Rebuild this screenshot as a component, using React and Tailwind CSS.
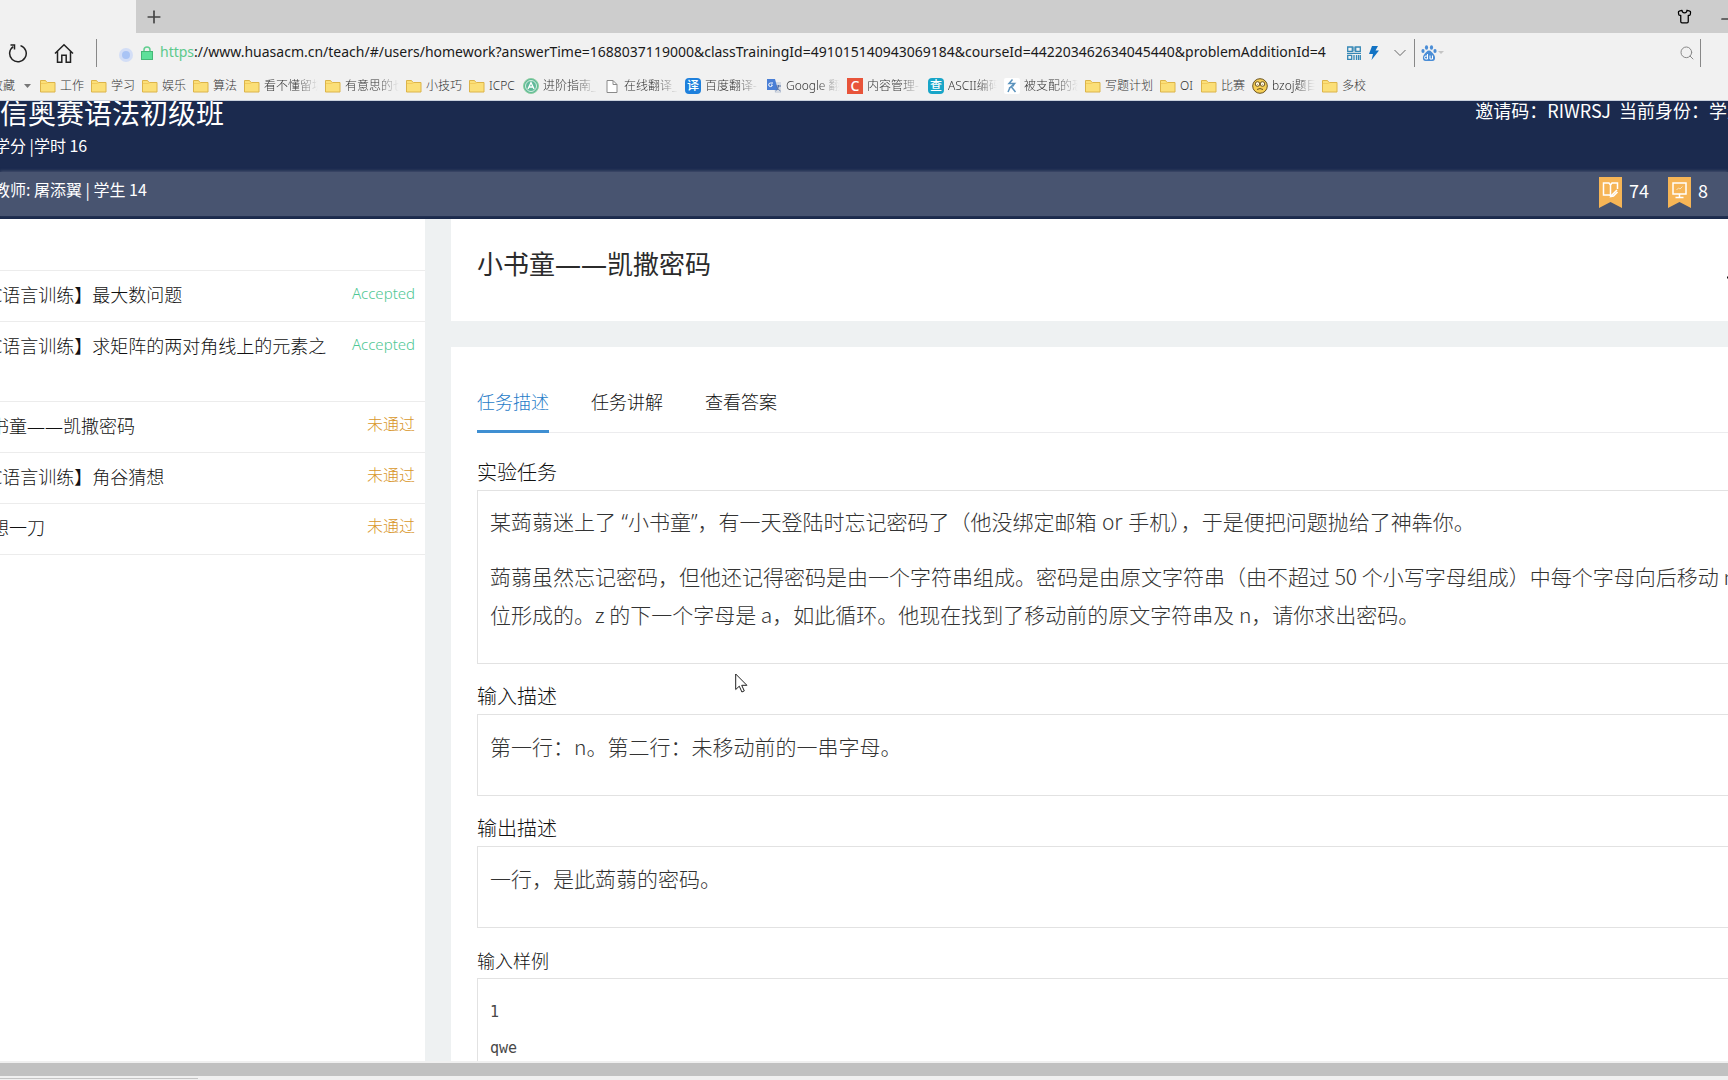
import { Minus, Plus, Search, Shirt } from "lucide-react"

const bookmarks = [
  { text: "工作", icon: "folder", width: "w-[24px]" },
  { text: "学习", icon: "folder", width: "w-[24px]" },
  { text: "娱乐", icon: "folder", width: "w-[24px]" },
  { text: "算法", icon: "folder", width: "w-[24px]" },
  { text: "看不懂留坑", icon: "folder", width: "w-[54px]", fade: true },
  { text: "有意思的也", icon: "folder", width: "w-[54px]", fade: true },
  { text: "小技巧", icon: "folder", width: "w-[36px]" },
  { text: "ICPC", icon: "folder", width: "w-[27px]" },
  { text: "进阶指南_", icon: "guide", width: "w-[54px]", fade: true },
  { text: "在线翻译_", icon: "page", width: "w-[54px]", fade: true },
  { text: "百度翻译-", icon: "fanyi", width: "w-[54px]", fade: true },
  { text: "Google 翻", icon: "google", width: "w-[54px]", fade: true },
  { text: "内容管理-", icon: "cms", width: "w-[54px]", fade: true },
  { text: "ASCII编码", icon: "ascii", width: "w-[49px]", fade: true },
  { text: "被支配的恐", icon: "person", width: "w-[54px]", fade: true },
  { text: "写题计划", icon: "folder", width: "w-[48px]" },
  { text: "OI", icon: "folder", width: "w-[14px]" },
  { text: "比赛", icon: "folder", width: "w-[24px]" },
  { text: "bzoj题目", icon: "face", width: "w-[43px]", fade: true },
  { text: "多校", icon: "folder", width: "w-[24px]" },
]

const problems = [
  { name: "【C语言训练】最大数问题", passed: true },
  { name: "【C语言训练】求矩阵的两对角线上的元素之和", passed: true },
  { name: "小书童——凯撒密码", passed: false },
  { name: "【C语言训练】角谷猜想", passed: false },
  { name: "　想一刀", passed: false },
]

function BookmarkIcon({ name }) {
  if (name === "folder") {
    return (
      <svg className="size-4 shrink-0" viewBox="0 0 16 16">
        <path d="M.5 2.5h5l1.5 2h8v9.500H.5z" fill="#fbdf78" stroke="#dcb44a" />
        <path d="M1 5.500h5.500l1.500-1" fill="none" stroke="#f3cb5c" />
      </svg>
    )
  }
  if (name === "page") {
    return (
      <svg className="size-4 shrink-0" viewBox="0 0 16 16" fill="#fff" stroke="#8a8a8a">
        <path d="M3 2.500h6l4 4v8H3z" />
        <path d="M9 2.500v4h4" fill="none" />
      </svg>
    )
  }
  if (name === "guide") {
    return (
      <svg className="size-4 shrink-0" viewBox="0 0 16 16" fill="none">
        <circle cx="8" cy="8" r="7.500" fill="#5fb99a" stroke="#8ed0a0" />
        <circle cx="8" cy="8" r="5.500" stroke="#d7f0e0" />
        <path d="M5 11l3-6.500L11 11M6 9h4" stroke="#fff" strokeWidth="1.300" />
      </svg>
    )
  }
  if (name === "google") {
    return (
      <svg className="size-4 shrink-0" viewBox="0 0 16 16" fill="none">
        <path d="M7 4h8v11H9z" fill="#d5dae2" />
        <path d="M1 1h8l3 11H1z" fill="#4a7fd6" />
        <path d="M7 5H4.500a1.800 1.800 0 1 0 1.800 2H5" stroke="#fff" />
        <path d="M10 8h5M12.500 7v1c0 2-1.500 4-3 5M11 9c.500 2 2 3 3.500 4" stroke="#5673a8" />
      </svg>
    )
  }
  if (name === "person") {
    return (
      <svg className="size-4 shrink-0" viewBox="0 0 16 16" fill="none">
        <rect width="16" height="16" rx="2" fill="#fff" />
        <path d="M8.500 1.500L5 5.500h5.500L5 10.500M10.500 5.500L8.500 8.500M6 9.500L4 14M7.500 9l4 5" stroke="#5b93bd" strokeWidth="1.500" />
      </svg>
    )
  }
  if (name === "face") {
    return (
      <svg className="size-4 shrink-0" viewBox="0 0 16 16" stroke="#6b5320">
        <circle cx="8" cy="8" r="7.300" fill="#f6cf55" />
        <circle cx="5.500" cy="6" r="2.300" fill="#fff8df" />
        <circle cx="10.500" cy="6" r="2.300" fill="#fff8df" />
        <path d="M5.500 6v.5M10.500 6v.5M5 11.500q3-2 6 0" fill="none" />
      </svg>
    )
  }
  if (name === "cms") {
    return <span className="grid size-4 shrink-0 place-items-center bg-[#e8543a] text-[14px] font-medium leading-4 text-white">C</span>
  }
  return (
    <span className={`grid size-4 shrink-0 place-items-center rounded-sm text-[12px] font-medium leading-4 text-white ${name === "fanyi" ? "bg-[#1e80dc]" : "bg-[#18a5c8]"}`}>
      {name === "fanyi" ? "译" : "查"}
    </span>
  )
}

function BrowserBar() {
  return (
    <div className="shrink-0 border-b border-[#c9d0dc] bg-[#f1f1f1]">
      {/* 标签栏 */}
      <div className="flex h-[33px]">
        <div className="w-[136px] shrink-0" />
        <div className="flex flex-1 items-center justify-between bg-[#cdcdcd] pl-2">
          <button aria-label="新标签页" className="text-[#444]">
            <Plus className="size-5" strokeWidth={2} />
          </button>
          <div className="-mr-2 flex items-center gap-[26px]">
            <button aria-label="皮肤">
              <Shirt className="size-[15px]" strokeWidth={2} />
            </button>
            <button aria-label="最小化" className="pt-1">
              <Minus className="size-[18px]" strokeWidth={1.5} />
            </button>
          </div>
        </div>
      </div>

      {/* 地址栏 */}
      <div className="flex h-[39px] items-center">
        <button aria-label="刷新" className="ml-2">
          <svg className="size-5" viewBox="0 0 20 20" fill="none" stroke="#222" strokeWidth="1.500">
            <path d="M12.500 2.600a8.300 8.300 0 1 1-7.200 1" />
            <path d="M2.500 2h4v4.500" />
          </svg>
        </button>
        <button aria-label="主页" className="ml-[26px]">
          <svg className="size-5" viewBox="0 0 20 20" fill="none" stroke="#222" strokeWidth="1.500">
            <path d="M1 10.500L10 1.700l9 8.800M3.500 8.500v10.700h4.300v-7h4.400v7h4.300V8.500" />
          </svg>
        </button>
        <div className="ml-[22px] h-7 w-px bg-[#888]" />
        <div className="ml-[22px] mt-1 grid size-[14px] place-items-center rounded-full bg-[#d3def6]">
          <div className="size-2 rounded-full bg-[#a9c4f5]" />
        </div>
        <svg className="ml-[7px] size-[14px]" viewBox="0 0 14 14">
          <path d="M4 6V4a3 3 0 0 1 6 0v2" fill="none" stroke="#62cf90" strokeWidth="1.500" />
          <rect x="1.500" y="5.500" width="11" height="8" fill="#5ee09a" stroke="#46b878" />
        </svg>
        <div className="ml-[6px] flex min-w-0 flex-1 pb-[2px] text-[14px] font-normal">
          <label htmlFor="address" className="text-[#5cc98c]">https</label>
          <input
            id="address"
            className="min-w-0 flex-1 bg-transparent text-[#1a1a1a] outline-none"
            defaultValue="://www.huasacm.cn/teach/#/users/homework?answerTime=1688037119000&classTrainingId=491015140943069184&courseId=442203462634045440&problemAdditionId=4"
          />
        </div>
        <div className="flex w-[385px] shrink-0 items-center">
          <svg className="ml-1 size-[14px]" viewBox="0 0 14 14" fill="none" stroke="#3487b5" strokeWidth="1.300">
            <path d="M.7 1h4.600v4.300H.7zM8.700 1h4.600v4.300H8.700zM7 .5v5M0 7.300h14M.7 9.300h4v4H.7zM7 9v5M9.500 9v5M11.500 9v5M13.300 9v5" />
          </svg>
          <svg className="ml-2 h-[14px] w-[10px]" viewBox="0 0 10 14" fill="#1273c4">
            <path d="M3 0h6L6.500 4.500H10L2.500 14 4 8H0z" />
          </svg>
          <button aria-label="展开" className="ml-[15px]">
            <svg className="h-2 w-3" viewBox="0 0 12 8" fill="none" stroke="#666">
              <path d="M.5 1L6 6.500 11.500 1" />
            </svg>
          </button>
          <div className="ml-2 h-7 w-px bg-[#888]" />
          <svg className="ml-[6px] size-4" viewBox="0 0 16 16" fill="#4a8dd6">
            <ellipse cx="2" cy="6" rx="1.600" ry="2" />
            <ellipse cx="5.500" cy="2.500" rx="1.600" ry="2.200" />
            <ellipse cx="10.500" cy="2.500" rx="1.600" ry="2.200" />
            <ellipse cx="14" cy="6" rx="1.600" ry="2" />
            <path d="M8 5.500c2 0 3 2 4.500 3.500C14.500 11 15 16 11.500 16h-7C1 16 1.500 11 3.500 9 5 7.500 6 5.500 8 5.500z" />
            <path d="M6.500 9v5H5a1.500 1.500 0 0 1 0-3h1.500M9 10.500V14h2.500v-3.500" fill="none" stroke="#fff" />
          </svg>
          <svg className="ml-px h-[3px] w-[6px]" viewBox="0 0 6 3" fill="#c4c4c4">
            <path d="M0 0h6L3 3z" />
          </svg>
          <input aria-label="搜索" className="min-w-0 flex-1 bg-transparent outline-none" />
          <button aria-label="搜索" className="text-[#888]">
            <Search className="size-4" strokeWidth={1.5} />
          </button>
          <div className="ml-[5px] mr-[27px] h-7 w-px bg-[#888]" />
        </div>
      </div>

      {/* 收藏栏 */}
      <div className="-ml-[9px] flex h-7 items-center overflow-hidden whitespace-nowrap text-[12px] leading-4 text-[#333]">
        <button className="mr-[9px] flex items-center gap-[9px]">
          收藏
          <svg className="h-1 w-[7px]" viewBox="0 0 7 4" fill="#777">
            <path d="M0 0h7L3.500 4z" />
          </svg>
        </button>
        <nav className="flex gap-[7px]">
          {bookmarks.map((b) => (
            <a key={b.text} href="#" className="flex items-center gap-1">
              <BookmarkIcon name={b.icon} />
              <span className={`${b.width} overflow-hidden ${b.fade ? "[mask-image:linear-gradient(to_right,black_60%,transparent)]" : ""}`}>
                {b.text}
              </span>
            </a>
          ))}
        </nav>
      </div>
    </div>
  )
}

function CourseHeader() {
  return (
    <header className="shrink-0 border-b-[3px] border-[#1b2a4b] bg-[#1b2a4e] font-['Noto_Sans_CJK_SC',sans-serif] font-normal text-white">
      <div className="flex h-[71px] justify-between overflow-hidden">
        <div>
          <h1 className="text-[28px] leading-[22px]">信奥赛语法初级班</h1>
          <p className="-ml-[6px] mt-[10px] text-[16px] leading-6">学分 |学时 16</p>
        </div>
        <p className="-mr-9 flex gap-2 whitespace-nowrap text-[18px] leading-[18px]">
          <span>邀请码：RIWRSJ</span>
          <span className="w-[145px]">当前身份：学生</span>
        </p>
      </div>
      <div className="flex h-[44px] items-center justify-between bg-[#485470] pb-2 shadow-[0_-1px_3px_#485470]">
        <p className="-ml-[6px] pb-[2px] text-[16px] leading-6">教师: 屠添翼 | 学生 14</p>
        <div className="flex items-center pr-5 pt-1 text-[18px] leading-6">
          <svg className="h-[31px] w-[23px]" viewBox="0 0 23 31" fill="none">
            <path d="M0 0h23v31l-11.500-6L0 31z" fill="#f6b556" />
            <path d="M11.500 8v11l-1-1H4.500V6h5.500zM11.500 8l1.500-2h5.500v6M18 13l-5 5-1 1.500 2.500-.500 4-4" stroke="#fff" strokeWidth="1.500" />
          </svg>
          <span className="ml-[7px] w-[39px] pb-1">74</span>
          <svg className="h-[31px] w-[23px]" viewBox="0 0 23 31" fill="none">
            <path d="M0 0h23v31l-11.500-6L0 31z" fill="#f6b556" />
            <path d="M5 6h13v11H5zM11.500 17v3M7.500 20.500h8" stroke="#fff" strokeWidth="1.500" />
            <path d="M8.500 13l2-2 1.500 1 2.500-2.500" stroke="#fbe3bb" />
          </svg>
          <span className="ml-[7px] pb-1">8</span>
        </div>
      </div>
    </header>
  )
}

function Section({ title, children }) {
  return (
    <section className="mb-[19px]">
      <h3 className="mb-[3px] text-[20px] leading-7">{title}</h3>
      <div className="border border-[#e2e2e2] px-3 pb-[14px] pt-3 font-['Noto_Sans_CJK_SC',sans-serif] text-[21px] leading-[38px] text-[#333]">
        {children}
      </div>
    </section>
  )
}

export default function App() {
  return (
    <div className="flex h-screen flex-col overflow-hidden bg-white font-['Noto_Sans','Noto_Sans_CJK_SC',sans-serif] font-light">
      <BrowserBar />
      <CourseHeader />

      <div className="flex min-h-0 flex-1 gap-[26px] overflow-hidden bg-[#eef1f2] text-[#111]">
        {/* 题目列表 */}
        <aside className="w-[425px] shrink-0 bg-white">
          <ul className="-ml-[27px] mt-[51px] border-t border-[#ececec]">
            {problems.map((p) => (
              <li key={p.name} className="flex items-start justify-between border-b border-[#ececec] pb-[11px] pr-[10px] pt-[10px]">
                <a href="#" className="w-[360px] text-[18px] leading-[29px]">{p.name}</a>
                {p.passed ? (
                  <span className="text-[15px] leading-6 text-[#4fc793]">Accepted</span>
                ) : (
                  <span className="text-[16px] leading-6 text-[#d8962a]">未通过</span>
                )}
              </li>
            ))}
          </ul>
        </aside>

        <main className="min-w-0 flex-1">
          <div className="-mr-[15px] flex h-[102px] items-start justify-between bg-white pl-[26px] pt-[27px]">
            <h2 className="text-[26px] font-normal leading-9 text-[#2b2b2b]">小书童——凯撒密码</h2>
            <button aria-label="展开" className="pt-7">
              <svg className="h-2 w-4" viewBox="0 0 16 8" fill="none" stroke="#111" strokeWidth="2">
                <path d="M0 3l8 5 8-5" />
              </svg>
            </button>
          </div>

          <div className="-mr-10 mt-[26px] bg-white pl-[26px] pt-10">
            <div className="mb-[26px] flex gap-[42px] border-b border-[#ececee] text-[18px]">
              <button className="-mb-px h-[46px] border-b-[3px] border-[#3f8fd2] pb-3 text-[#1f7cc8]">任务描述</button>
              <button className="-mb-px h-[46px] border-b-[3px] border-transparent pb-3">任务讲解</button>
              <button className="-mb-px h-[46px] border-b-[3px] border-transparent pb-3">查看答案</button>
            </div>

            <Section title="实验任务">
              <p className="mb-4 font-['Noto_Sans','Noto_Sans_CJK_SC',sans-serif]">
                某蒟蒻迷上了 “小书童”，有一天登陆时忘记密码了（他没绑定邮箱 or 手机），于是便把问题抛给了神犇你。
              </p>
              <p className="mb-4 whitespace-nowrap">
                蒟蒻虽然忘记密码，但他还记得密码是由一个字符串组成。密码是由原文字符串（由不超过 50 个小写字母组成）中每个字母向后移动 n
                <br />
                位形成的。z 的下一个字母是 a，如此循环。他现在找到了移动前的原文字符串及 n，请你求出密码。
              </p>
            </Section>
            <Section title="输入描述">
              <p className="mb-4">第一行：n。第二行：未移动前的一串字母。</p>
            </Section>
            <Section title="输出描述">
              <p className="mb-4">一行，是此蒟蒻的密码。</p>
            </Section>
            <section>
              <h3 className="mb-[3px] text-[18px] leading-7">输入样例</h3>
              <pre className="border border-[#e2e2e2] px-3 py-[15px] font-['DejaVu_Sans_Mono',monospace] text-[15px] leading-9 text-[#484848]">
                {"1\nqwe"}
              </pre>
            </section>
          </div>
        </main>
      </div>

      {/* 横向滚动条 */}
      <div className="h-[19px] shrink-0 bg-[#f0f0f0] pt-[2px]">
        <div className="h-[13px] bg-[#c1c1c1]" />
        <div className="mt-[2px] h-px w-[198px] bg-[#c4c4c4]" />
      </div>

      {/* 鼠标指针 */}
      <svg className="absolute left-[735px] top-[673px] h-5 w-[13px]" viewBox="0 0 13 20" fill="#fff" stroke="#222">
        <path d="M.7 1v15.500l3.600-3.300 2.600 5.800 2.400-1.100-2.600-5.600h5.200z" />
      </svg>
    </div>
  )
}
